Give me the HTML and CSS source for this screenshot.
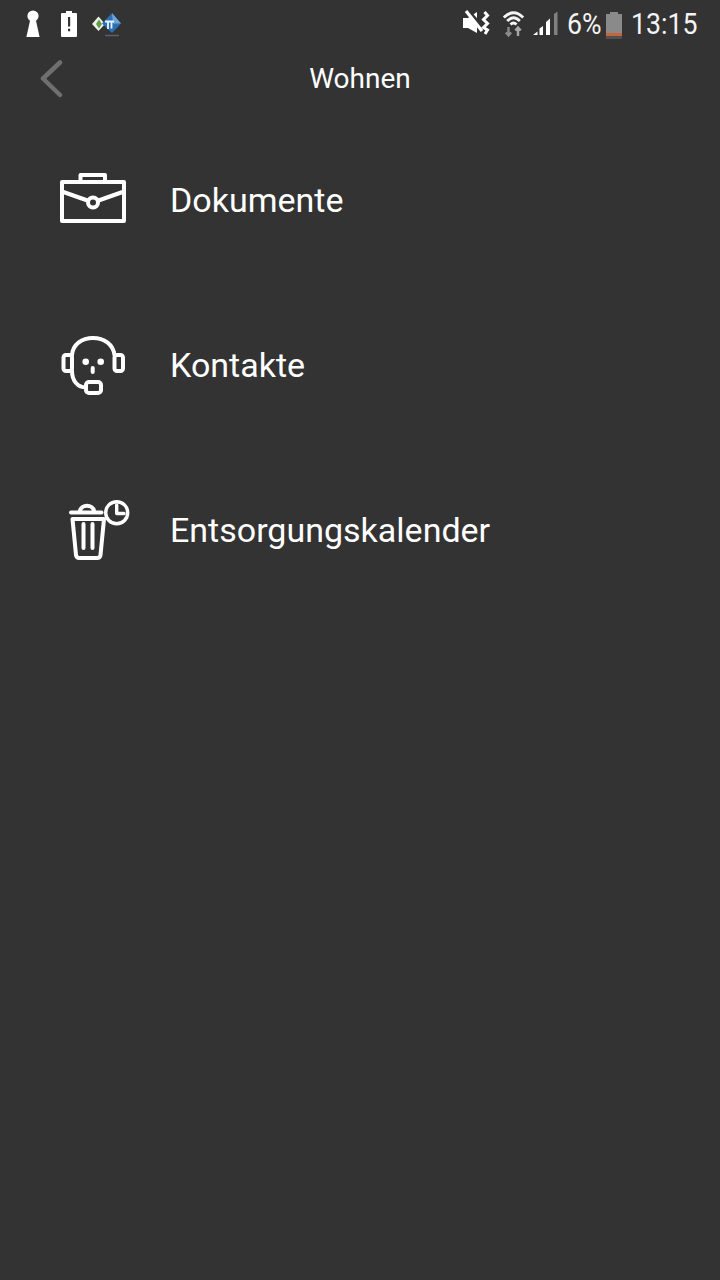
FILE: index.html
```html
<!DOCTYPE html>
<html>
<head>
  <title>Wohnen</title>
  <link rel="stylesheet" href="styles.css">
</head>
<body>
  <!-- Status bar -->
  <div class="status-bar">
    <div class="status-left">
      <svg class="ic-key" width="14" height="48" viewBox="0 0 14 48"><circle cx="7" cy="16" r="5.6" fill="#fff"></circle><path d="M4.600 18 H9.400 L13.600 37 H.4 Z" fill="#fff"></path></svg>
      <svg class="ic-alert" width="16" height="48" viewBox="0 0 16 48"><path d="M5 11 H11 V13 H15 Q16 13 16 14 V36 Q16 37 15 37 H1 Q0 37 0 36 V14 Q0 13 1 13 H5 Z" fill="#fff"></path><path d="M7 17 H9.200 V26.500 H7 Z M7 28.800 H9.200 V31.200 H7 Z" fill="#333"></path></svg>
      <svg class="ic-app" width="29" height="48" viewBox="0 0 29 48"><path d="M0 24 L6.500 16.500 L13 24 L6.500 31 Z" fill="#eef1ea"></path><path d="M4 24 L7 19.500 L10 24 L7 28.500 Z" fill="#5f9e48"></path><path d="M10 23.500 L20 13 L29 23.500 L20 33 Z" fill="#2b6fb5"></path><path d="M20 13 L29 23.500 L21 23.500 Z" fill="#6ea6d8"></path><path d="M13 21.500 H22 M16 21.500 V29 M19.500 21.500 V28.500" stroke="#eaf3fb" stroke-width="1.800" fill="none"></path><path d="M13 35.500 H27" stroke="#5a6068" stroke-width="1.500"></path></svg>
    </div>
    <div class="status-right">
      <svg class="ic-mute" width="27" height="48" viewBox="0 0 27 48"><path d="M0 18 H5 L14 12 V33 L5 28 H0 Z" fill="#fff"></path><path d="M5 10 L21 29" stroke="#333" stroke-width="3"></path><path d="M3 11 L19 31" stroke="#fff" stroke-width="3.200"></path><path d="M21.500 12 L24.500 15.500 L20.500 19.500 L24.500 23.500 L20.500 27.500 L24.500 30 L22 34" stroke="#fff" stroke-width="3" fill="none"></path></svg>
      <svg class="ic-wifi" width="22" height="48" viewBox="0 0 22 48"><path d="M.8 17.500 Q10.500 8 20.200 17.500" stroke="#f4f4f4" stroke-width="2.800" fill="none"></path><path d="M4.200 21 Q10.500 14.500 16.800 21" stroke="#f4f4f4" stroke-width="2.800" fill="none"></path><path d="M7.500 24.500 Q10.500 21.500 13.500 24.500" stroke="#f4f4f4" stroke-width="2.800" fill="none"></path><path d="M5.500 27 V35.500 M2.800 32.500 L5.500 35.500 L8.200 32.500" stroke="#8a8a8a" stroke-width="2.400" fill="none"></path><path d="M15 36 V27.500 M12.300 30.500 L15 27.500 L17.700 30.500" stroke="#a8a8a8" stroke-width="2.400" fill="none"></path></svg>
      <svg class="ic-signal" width="26" height="48" viewBox="0 0 26 48"><path d="M1 35 L5.500 31.500 V35 Z M7.500 35 V28.500 L11 26 V35 Z M14 35 V22 L18 18.500 V35 Z" fill="#fff"></path><path d="M22 35 V14 L25.500 11.500 V35 Z" fill="#808080"></path></svg>
      <span class="batt-pct">6%</span>
      <svg class="ic-batt" width="16" height="48" viewBox="0 0 16 48"><path d="M4 12 H12 V14 H16 V33 H0 V14 H4 Z" fill="#8a8a8a"></path><rect x="0" y="33" width="16" height="3" fill="#c4653c"></rect><rect x="0" y="36" width="16" height="3" fill="#50504e"></rect></svg>
      <span class="clock">13:15</span>
    </div>
  </div>

  <!-- Nav bar -->
  <div class="nav-bar">
    <svg class="back" width="24" height="60" viewBox="0 0 24 60"><path d="M20 14.500 L3 30.500 L20 47" stroke="#6f6f6f" stroke-width="4.500" stroke-linecap="round" stroke-linejoin="round" fill="none"></path></svg>
    <h1 class="nav-title">Wohnen</h1>
    <span></span>
  </div>

  <!-- Menu -->
  <div class="menu">
    <div class="menu-row">
      <svg class="menu-icon" width="70" height="70" viewBox="0 0 70 70"><rect x="2" y="16" width="62" height="39"></rect><path d="M20.500 16 V9 H45 V16"></path><path d="M2 25.500 L27.500 34.500 M38.500 34.500 L64 25.500"></path><circle cx="33" cy="36.500" r="5"></circle></svg>
      <span class="menu-label">Dokumente</span>
    </div>
    <div class="menu-row">
      <svg class="menu-icon" width="70" height="70" viewBox="0 0 70 70"><path d="M12 24 C13 13 22 7 33 7 C44 7 53 13 54.500 24"></path><rect x="3.500" y="24" width="8.500" height="16" rx="2.500"></rect><rect x="54.500" y="24" width="8.500" height="16" rx="2.500"></rect><path d="M12 40 C12 50 18 56.500 26 56.500"></path><rect x="26" y="51" width="15" height="11" rx="3"></rect><circle class="solid" cx="25.700" cy="30.700" r="3.300"></circle><circle class="solid" cx="40.700" cy="30.700" r="3.300"></circle><path d="M32.700 37 V41"></path></svg>
      <span class="menu-label">Kontakte</span>
    </div>
    <div class="menu-row">
      <svg class="menu-icon" width="70" height="70" viewBox="0 0 70 70"><path d="M11 16.500 H41.500"></path><path d="M20 15 C21 8 33 8 34 15"></path><path d="M12.500 23 L16 59 Q16.300 62 19.500 62 H37 Q40.200 62 40.500 59 L44 23 Z"></path><path d="M23.500 28 V52 M32.500 28 V52"></path><circle class="ring" cx="56.700" cy="16.700" r="11"></circle><path class="thin" d="M56.700 9 V17.500 H64"></path></svg>
      <span class="menu-label">Entsorgungskalender</span>
    </div>
  </div>
</body>
</html>
```

FILE: styles.css
```css
body {
  margin: 0;
  width: 720px;
  height: 1280px;
  background-color: #333333;
  color: #ffffff;
  font-family: Roboto, "Noto Sans", sans-serif;
  overflow: hidden;
}

/* Status bar */
.status-bar {
  display: flex;
  justify-content: space-between;
  align-items: center;
  height: 48px;
  padding: 0 23px 0 26px;
}
.status-left, .status-right { display: flex; align-items: center; }
.status-bar svg { display: block; }
.ic-alert { margin-left: 21px; }
.ic-app { margin-left: 15px; }
.ic-wifi { margin-left: 13px; }
.ic-signal { margin-left: 7px; }
.batt-pct, .clock {
  font-size: 29px;
  color: #f4f4f4;
  white-space: nowrap;
  transform-origin: left center;
}
.batt-pct { width: 33px; margin-left: 9px; transform: scaleX(0.92); }
.ic-batt { margin-left: 6px; }
.clock { width: 66px; margin-left: 9px; transform: scaleX(0.92); }

/* Nav bar */
.nav-bar {
  display: grid;
  grid-template-columns: 1fr auto 1fr;
  align-items: center;
  height: 60px;
  padding-left: 40px;
  padding-right: 40px;
}
.back { display: block; }
.nav-title { margin: 0; font-size: 28px; font-weight: 400; }

/* Menu */
.menu { padding-top: 10px; }
.menu-row {
  display: flex;
  align-items: center;
  gap: 40px;
  height: 165px;
  padding-left: 60px;
}
.menu-label { margin-bottom: 2px; font-size: 34px; }
.menu-icon { display: block; fill: none; stroke: #ffffff; stroke-width: 4; stroke-linejoin: round; stroke-linecap: round; }
.menu-icon .solid { fill: #ffffff; stroke: none; }
.menu-icon .thin { stroke-width: 3.4; }
.menu-icon .ring { stroke-width: 3.4; }
```
